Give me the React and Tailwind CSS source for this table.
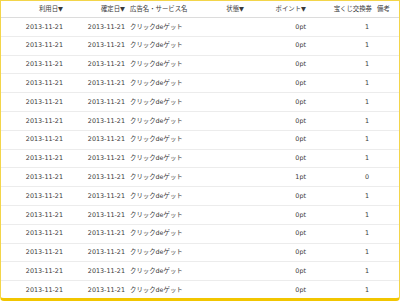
export default function App() {
  const rows = Array.from({ length: 15 }, (_, i) => ({
    use: "2013-11-21",
    fix: "2013-11-21",
    name: "クリックdeゲット",
    pt: i === 8 ? "1pt" : "0pt",
    lot: i === 8 ? "0" : "1",
  }));
  const font = { fontFamily: '"DejaVu Sans", "Noto Sans CJK JP", sans-serif' };
  return (
    <div
      className="w-[400px] h-[301px] bg-white border border-[#f3d54a] border-b-[3px] border-b-[#f2c600] rounded-b-[4px] overflow-hidden text-[#3a3a3a] text-[6.4px] leading-none"
      style={font}
    >
      <div className="grid grid-cols-[63px_62px_60px_62px_60px_66px_1fr] items-center h-[17px] border-b border-[#dcdcdc]">
        <div className="text-right pr-[1px]">利用日▼</div>
        <div className="text-right pr-[1px]">確定日▼</div>
        <div className="pl-[4px] whitespace-nowrap">広告名・サービス名</div>
        <div className="text-right pr-[4px]">状態▼</div>
        <div className="text-right pr-[2px]">ポイント▼</div>
        <div className="text-right pr-[2px] whitespace-nowrap">宝くじ交換券</div>
        <div className="pl-[3px]">備考</div>
      </div>
      {rows.map((r, i) => (
        <div
          key={i}
          className="grid grid-cols-[63px_62px_60px_62px_60px_66px_1fr] items-center h-[18.8px] border-b border-[#ececec]"
        >
          <div className="text-right pr-[1px]">{r.use}</div>
          <div className="text-right pr-[1px]">{r.fix}</div>
          <div className="pl-[4px] whitespace-nowrap">{r.name}</div>
          <div></div>
          <div className="text-right pr-[2px]">{r.pt}</div>
          <div className="text-right pr-[5px]">{r.lot}</div>
          <div></div>
        </div>
      ))}
    </div>
  );
}
